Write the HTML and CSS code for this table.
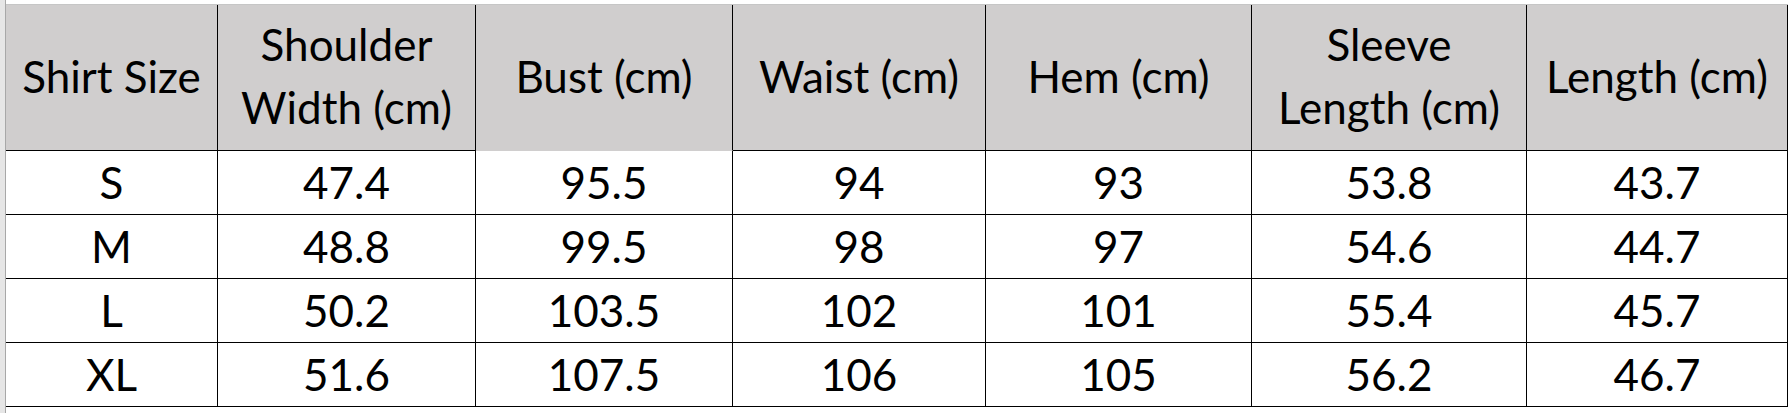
FILE: index.html
```html
<!DOCTYPE html>
<html>
<head>
<meta charset="utf-8">
<link rel="stylesheet" href="styles.css">
<title>Shirt Size Chart</title>
</head>
<body>
<div class="sheet">
  <div class="rowhead"></div>
  <div class="grid-area">
    <div class="topgap"></div>
    <div class="chart">
      <div class="cell hd">Shirt Size</div>
      <div class="cell hd">Shoulder<br>Width (cm)</div>
      <div class="cell hd nob">Bust (cm)</div>
      <div class="cell hd">Waist (cm)</div>
      <div class="cell hd">Hem (cm)</div>
      <div class="cell hd">Sleeve<br>Length (cm)</div>
      <div class="cell hd">Length (cm)</div>

      <div class="cell">S</div><div class="cell">47.4</div><div class="cell">95.5</div><div class="cell">94</div><div class="cell">93</div><div class="cell">53.8</div><div class="cell">43.7</div>
      <div class="cell">M</div><div class="cell">48.8</div><div class="cell">99.5</div><div class="cell">98</div><div class="cell">97</div><div class="cell">54.6</div><div class="cell">44.7</div>
      <div class="cell">L</div><div class="cell">50.2</div><div class="cell">103.5</div><div class="cell">102</div><div class="cell">101</div><div class="cell">55.4</div><div class="cell">45.7</div>
      <div class="cell">XL</div><div class="cell">51.6</div><div class="cell">107.5</div><div class="cell">106</div><div class="cell">105</div><div class="cell">56.2</div><div class="cell">46.7</div>
    </div>
  </div>
  <div class="rightgap"></div>
</div>
</body>
</html>
```

FILE: styles.css
```css
* { box-sizing: border-box; }
html, body {
  margin: 0;
  padding: 0;
  background: #ffffff;
}
body {
  font-family: "Lato", "Liberation Sans", sans-serif;
  color: #000000;
  width: 1792px;
  height: 413px;
  overflow: hidden;
}
.sheet {
  display: flex;
  height: 413px;
}
.rowhead {
  width: 6px;
  flex: none;
  background: #e6e6e6;
  border-right: 1px solid #a8a8a8;
}
.grid-area {
  display: flex;
  flex-direction: column;
}
.topgap {
  height: 5px;
  background: #ffffff;
  border-bottom: 1px solid #c6c6c6;
}
.chart {
  display: grid;
  grid-template-columns: 212px 258px 257px 253px 266px 275px 261px;
  grid-template-rows: 146px 64px 64px 64px 64px;
}
.cell {
  display: flex;
  align-items: center;
  justify-content: center;
  text-align: center;
  border-right: 1px solid #000000;
  border-bottom: 1px solid #000000;
  font-size: 44px;
  line-height: 48px;
  padding-bottom: 1px;
}
.hd {
  background: #d0cece;
  line-height: 63px;
  padding-bottom: 3px;
}
.nob {
  border-bottom-color: transparent;
}
.rightgap {
  flex: 1;
  background: #ffffff;
}
```
